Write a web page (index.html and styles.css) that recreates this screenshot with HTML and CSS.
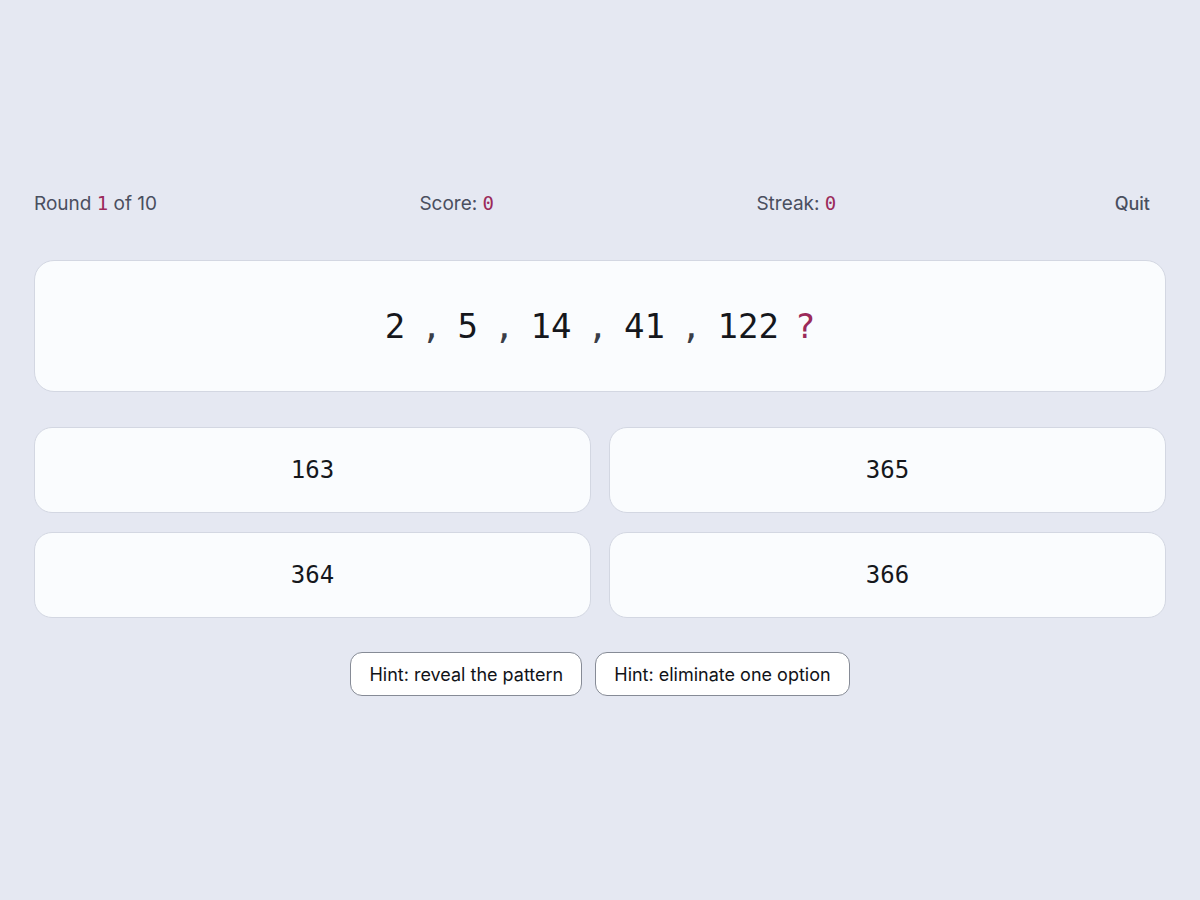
FILE: index.html
```html
<!DOCTYPE html>
<html lang="en">
<head>
    <meta charset="UTF-8">
    <meta name="viewport" content="width=device-width, initial-scale=1.0">
    <title>Sequence Quiz</title>
    <link rel="stylesheet" href="styles.css">
</head>
<body>

<div class="game">
    <div class="status">
        <div class="stat">Round <span class="num">1</span> of 10</div>
        <div class="stat">Score: <span class="num">0</span></div>
        <div class="stat">Streak: <span class="num">0</span></div>
        <button class="quit-btn">Quit</button>
    </div>

    <div class="sequence-card">
        <div class="sequence">
            <span class="term">2</span>
            <span class="sep">,</span>
            <span class="term">5</span>
            <span class="sep">,</span>
            <span class="term">14</span>
            <span class="sep">,</span>
            <span class="term">41</span>
            <span class="sep">,</span>
            <span class="term">122</span>
            <span class="missing">?</span>
        </div>
    </div>

    <div class="options">
        <button class="option">163</button>
        <button class="option">365</button>
        <button class="option">364</button>
        <button class="option">366</button>
    </div>

    <div class="hints">
        <button class="hint-btn">Hint: reveal the pattern</button>
        <button class="hint-btn">Hint: eliminate one option</button>
    </div>
</div>

</body>
</html>
```

FILE: styles.css
```css
body {
    font-family: 'Inter', 'Liberation Sans', sans-serif;
    background: #e5e8f2;
    margin: 0;
    padding: 0;
    color: #111318;
}

.game {
    max-width: 1132px;
    margin: 0 auto;
    padding: 188px 0 0;
}

.status {
    display: flex;
    justify-content: space-between;
    align-items: center;
    font-size: 19px;
    color: #4a4f5f;
    height: 30px;
}
.num {
    font-family: 'DejaVu Sans Mono', monospace;
    font-size: 19px;
    color: #9b2a5a;
}
.quit-btn {
    background: none;
    border: none;
    font-family: inherit;
    font-size: 18px;
    font-weight: 500;
    color: #4a4f5f;
    padding: 4px 16px;
    cursor: pointer;
}

.sequence-card {
    margin-top: 42px;
    height: 130px;
    background: #fafcfe;
    border: 1px solid #d3d7e2;
    border-radius: 20px;
    display: flex;
    align-items: center;
    justify-content: center;
}
.sequence {
    display: flex;
    align-items: baseline;
    gap: 16px;
    font-family: 'DejaVu Sans Mono', monospace;
    font-size: 34px;
    color: #15171c;
}
.sep {
    color: #3a3e48;
}
.missing {
    color: #9b2a5a;
}

.options {
    margin-top: 35px;
    display: grid;
    grid-template-columns: 1fr 1fr;
    gap: 19px 18px;
}
.option {
    height: 86px;
    background: #fafcfe;
    border: 1px solid #d3d7e2;
    border-radius: 18px;
    font-family: 'DejaVu Sans Mono', monospace;
    font-size: 24px;
    color: #15171c;
    cursor: pointer;
}

.hints {
    margin-top: 34px;
    display: flex;
    justify-content: center;
    gap: 13px;
}
.hint-btn {
    background: #ffffff;
    border: 1px solid #868b96;
    border-radius: 12px;
    padding: 0 18px;
    height: 44px;
    font-family: inherit;
    font-size: 18px;
    color: #111318;
    cursor: pointer;
}
```
